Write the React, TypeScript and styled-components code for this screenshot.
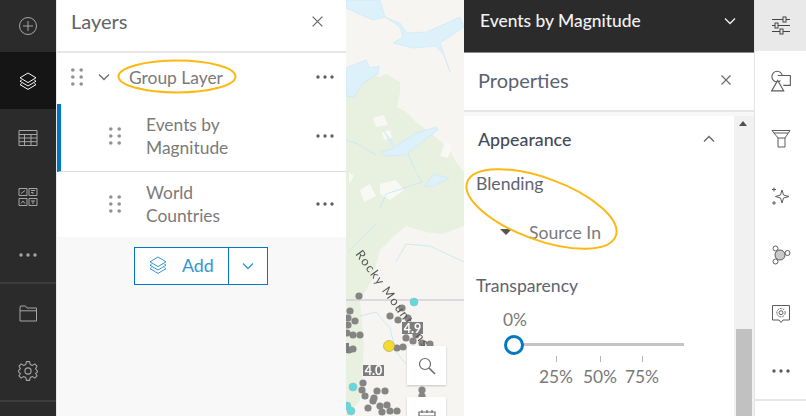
import React from "react";
import styled, { createGlobalStyle } from "styled-components";

const Global = createGlobalStyle`
  html, body { margin: 0; padding: 0; background: #fff; }
  body { font-family: Lato, "Open Sans", "Liberation Sans", sans-serif; }
  * { box-sizing: border-box; }
`;

const Page = styled.div`
  position: relative;
  display: flex;
  width: 806px;
  height: 416px;
  overflow: hidden;
  background: #fff;
`;

const LeftRail = styled.nav`
  flex: 0 0 56px;
  display: flex;
  flex-direction: column;
  background: #2b2b2b;
`;
const RailGroup = styled.div`
  display: flex;
  flex-direction: column;
  border-bottom: 2px solid #3c3c3c;
`;
const RailButton = styled.div<{ $h: number; $active?: boolean }>`
  height: ${(p) => p.$h}px;
  display: flex;
  align-items: center;
  justify-content: center;
  background: ${(p) => (p.$active ? "#151515" : "transparent")};
  color: ${(p) => (p.$active ? "#f4f4f4" : "#a6a6a6")};
`;

const LayersPanel = styled.section`
  flex: 0 0 290px;
  display: flex;
  flex-direction: column;
  background: #f8f8f8;
  border-left: 1px solid #e8e8e8;
`;
const PanelHeader = styled.header<{ $h: number; $pad: number; $closeRight: number; $lift: number }>`
  height: ${(p) => p.$h}px;
  flex: none;
  display: flex;
  align-items: center;
  justify-content: space-between;
  padding: 0 ${(p) => p.$closeRight}px ${(p) => p.$lift}px ${(p) => p.$pad}px;
  background: #fff;
  border-bottom: 2px solid #e6e6e6;
  color: #6a6a6a;
`;
const PanelTitle = styled.h2`
  margin: 0;
  font-size: 20px;
  font-weight: 400;
  color: #636363;
`;
const LayerList = styled.div`
  display: flex;
  flex-direction: column;
  background: #fff;
`;
const LayerRow = styled.div<{ $h: number; $indent: number; $lift: number; $selected?: boolean; $divider?: boolean }>`
  height: ${(p) => p.$h}px;
  display: flex;
  align-items: center;
  padding: 0 11px ${(p) => p.$lift}px ${(p) => p.$indent}px;
  font-size: 17.4px;
  line-height: 23px;
  border-left: 4px solid ${(p) => (p.$selected ? "#0079c1" : "transparent")};
  border-bottom: ${(p) => (p.$divider ? "1px solid #dedede" : "0")};
`;
const Grip = styled.span<{ $gap: number }>`
  display: flex;
  margin-right: ${(p) => p.$gap}px;
  color: #929292;
`;
const Chevron = styled.span`
  display: flex;
  margin-right: 19px;
  color: #6a6a6a;
`;
const LayerName = styled.span`
  flex: 1;
  color: #7a7a7a;
`;
const MoreButton = styled.span`
  display: flex;
  color: #5e5e5e;
`;
const AddBar = styled.div`
  display: flex;
  padding: 10px 0 0 77px;
`;
const AddButton = styled.div`
  display: flex;
  width: 134px;
  height: 38px;
  border: 1.5px solid #0079c1;
  background: #fff;
  color: #3396d2;
  font-size: 17.8px;
`;
const AddMain = styled.div`
  width: 94px;
  display: flex;
  align-items: center;
  gap: 14px;
  padding-left: 13px;
  padding-bottom: 2px;
  border-right: 1.5px solid #0079c1;
`;
const AddCaret = styled.div`
  flex: 1;
  display: flex;
  align-items: center;
  justify-content: center;
`;

const MapArea = styled.div`
  position: relative;
  flex: 0 0 118px;
  height: 416px;
  overflow: hidden;
  background: #f6f5f2;
`;
const MapArt = styled.svg`
  display: block;
  filter: blur(0.4px);
`;
const MapTool = styled.div<{ $top: number }>`
  position: absolute;
  left: 61px;
  top: ${(p) => p.$top}px;
  width: 39px;
  height: 39px;
  display: flex;
  align-items: center;
  justify-content: center;
  background: #fff;
  color: #6a6a6a;
  box-shadow: 0 1px 2px rgba(0, 0, 0, 0.2);
`;

const PropertiesPanel = styled.section`
  flex: 0 0 291px;
  display: flex;
  flex-direction: column;
  background: #fff;
  border-right: 1px solid #e4e4e4;
`;
const DarkHeader = styled.div`
  height: 53px;
  flex: none;
  display: flex;
  align-items: center;
  justify-content: space-between;
  padding: 0 18px 11px 16px;
  background: #2b2b2b;
  border-bottom: 1px solid #8a8a8a;
  color: #f2f2f2;
  font-size: 17.4px;
  font-weight: 500;
`;
const PropTitle = styled.h2`
  margin: 0;
  font-size: 20px;
  font-weight: 400;
  color: #5b6270;
`;
const PropBody = styled.div`
  flex: 1;
  min-height: 0;
  display: flex;
  padding-top: 4px;
  background: linear-gradient(#f8f8f8 0 4px, #fff 4px);
`;
const PropContent = styled.div`
  flex: 1;
  padding: 13px 0 0 12px;
  background: #fff;
`;
const SectionHead = styled.div`
  display: flex;
  align-items: center;
  justify-content: space-between;
  padding: 0 19px 2px 2px;
  height: 22px;
  font-size: 17.8px;
  font-weight: 500;
  color: #434957;
`;
const FieldLabel = styled.div<{ $top: number }>`
  margin-top: ${(p) => p.$top}px;
  font-size: 17.6px;
  line-height: 20px;
  color: #5d6470;
`;
const SelectRow = styled.div`
  display: flex;
  align-items: center;
  gap: 17px;
  margin-top: 28px;
  padding-left: 24px;
  height: 20px;
  font-size: 17.6px;
  color: #7a7a7a;
`;
const Caret = styled.span`
  width: 0;
  height: 0;
  border-left: 6px solid transparent;
  border-right: 6px solid transparent;
  border-top: 6px solid #555;
`;
const SliderBlock = styled.div`
  position: relative;
  height: 84px;
  margin-top: 14px;
  color: #787878;
  font-size: 17.4px;
`;
const ValueLabel = styled.div`
  padding-left: 27px;
  line-height: 20px;
`;
const Track = styled.div`
  position: absolute;
  left: 40px;
  top: 33px;
  width: 168px;
  height: 3px;
  background: #c4c4c4;
`;
const Thumb = styled.div`
  position: absolute;
  left: 28px;
  top: 25px;
  width: 20px;
  height: 20px;
  border-radius: 50%;
  border: 3px solid #0079c1;
  background: #fff;
`;
const Tick = styled.div<{ $x: number }>`
  position: absolute;
  left: ${(p) => p.$x}px;
  top: 46px;
  width: 1px;
  height: 6px;
  background: #b5b5b5;
`;
const TickLabel = styled.div<{ $x: number }>`
  position: absolute;
  left: ${(p) => p.$x}px;
  top: 57px;
  width: 44px;
  margin-left: -22px;
  text-align: center;
  line-height: 20px;
`;
const ScrollBar = styled.div`
  position: relative;
  flex: 0 0 20px;
  background: #f1f1f1;
`;
const ScrollUp = styled.div`
  position: absolute;
  left: 5px;
  top: 5px;
  width: 0;
  height: 0;
  border-left: 4.5px solid transparent;
  border-right: 4.5px solid transparent;
  border-bottom: 5px solid #505050;
`;
const ScrollThumb = styled.div`
  position: absolute;
  left: 2px;
  right: 2px;
  top: 213px;
  bottom: 0;
  background: #c1c1c1;
`;

const RightRail = styled.nav`
  flex: 1;
  display: flex;
  flex-direction: column;
  color: #5c5c5c;
`;
const ToolGroup = styled.div`
  display: flex;
  flex-direction: column;
  border-bottom: 2px solid #e6e6e6;
`;
const ToolButton = styled.div<{ $h: number; $active?: boolean }>`
  height: ${(p) => p.$h}px;
  display: flex;
  align-items: center;
  justify-content: center;
  background: ${(p) => (p.$active ? "#e9e9e9" : "transparent")};
`;
const Annotations = styled.svg`
  position: absolute;
  inset: 0;
  pointer-events: none;
`;

type IconProps = { size?: number; children: React.ReactNode };
const Ico = ({ size = 20, children }: IconProps) => (
  <svg width={size} height={size} viewBox="0 0 20 20" fill="none" stroke="currentColor" strokeWidth="1">
    {children}
  </svg>
);

const LayersIcon = ({ size = 20 }: { size?: number }) => (
  <Ico size={size}>
    <path d="M10 2 L18 6.8 L10 11.6 L2 6.8 Z" />
    <path d="M3.6 9.2 L2 10.2 L10 15 L18 10.2 L16.4 9.2" />
    <path d="M3.6 12.6 L2 13.6 L10 18.4 L18 13.6 L16.4 12.6" />
  </Ico>
);
const Dots = () => (
  <svg width="20" height="6" viewBox="0 0 20 6" fill="currentColor">
    <circle cx="3" cy="3" r="1.7" />
    <circle cx="10" cy="3" r="1.7" />
    <circle cx="17" cy="3" r="1.7" />
  </svg>
);
const GripDots = () => (
  <svg width="12" height="18" viewBox="0 0 12 18" fill="currentColor">
    {[2, 9, 16].map((y) =>
      [1.8, 10.2].map((x) => <circle key={`${x}-${y}`} cx={x} cy={y} r="1.8" />)
    )}
  </svg>
);
const ChevronDown = ({ w = 12 }: { w?: number }) => (
  <svg width={w} height="8" viewBox="0 0 12 8" fill="none" stroke="currentColor" strokeWidth="1.3">
    <path d="M1 1.5 L6 6.5 L11 1.5" />
  </svg>
);
const Close = ({ size = 13 }: { size?: number }) => (
  <svg width={size} height={size} viewBox="0 0 12 12" fill="none" stroke="currentColor" strokeWidth="1.2">
    <path d="M1.5 1.5 L10.5 10.5 M10.5 1.5 L1.5 10.5" />
  </svg>
);

const GRAY: [number, number][] = [
  [13, 296], [56, 308], [44, 316], [62, 318], [4, 311], [2, 318], [9, 321], [2, 325], [1, 333], [7, 335],
  [14, 335], [7, 349], [51, 348], [57, 347], [67, 341], [76, 343], [84, 344], [17, 383], [16, 390], [19, 396],
  [31, 391], [39, 391], [27, 401], [34, 406], [22, 408], [41, 405], [44, 411], [51, 411], [76, 390], [76, 396],
  [28, 398], [36, 412], [60, 331], [52, 320], [70, 335], [3, 350], [60, 338],
];
const CYAN: [number, number][] = [[68, 302], [7, 387], [1, 406], [5, 411]];

const MapPicture = () => (
  <MapArt width="118" height="416" viewBox="0 0 118 416">
    <path d="M0 70 L14 72 L34 77 L40 74 L54 82 L54 92 L51 107 L60 112 L71 123 L84 132 L104 150 L110 162 L118 172 L118 226 L96 234 L80 232 L60 226 L48 236 L34 250 L26 280 L14 300 L18 345 L14 400 L0 416 Z" fill="#e8f0df" />
    <path d="M27 118 L38 115 L42 125 L30 127 Z M36 132 L44 130 L46 138 L38 140 Z M34 184 L50 180 L58 190 L44 200 L34 194 Z M100 140 L106 146 L102 158 L94 156 Z M3 172 L8 176 L3 184 Z M14 190 L24 184 L30 196 L18 202 Z" fill="#f8f8f5" />
    <path d="M0 0 L34 0 L39 17 L27 20 L0 8 Z" fill="#dcf1fa" stroke="#c8e8f4" strokeWidth="0.6" />
    <path d="M39 17 L54 23 L61 33 L81 32 L114 17 L118 27 L94 43 L104 72 L98 55 L90 46 L67 48 L47 43 L57 37 L54 27 Z" fill="#dcf1fa" stroke="#c8e8f4" strokeWidth="0.6" />
    <path d="M0 68 L20 60 L24 68 L33 66 L32 74 L16 84 L8 97 L0 96 Z" fill="#dcf1fa" stroke="#c8e8f4" strokeWidth="0.6" />
    <path d="M37 130 L50 146 L70 133 L90 127 L92 130 L72 145 L60 155 L40 156 L35 152 L48 148 Z" fill="#dcf1fa" stroke="#c8e8f4" strokeWidth="0.6" />
    <path d="M78 186 L88 174 L103 178 L88 186 Z" fill="#dcf1fa" stroke="#c8e8f4" strokeWidth="0.6" />
    <path d="M0 140 L12 144 L30 155 M62 154 L70 172 L76 182 M76 182 L40 194 L34 208 M50 262 L60 244 L84 246 L118 262 M14 316 L30 312 L44 328 L50 352 L60 364 M2 252 L30 224" fill="none" stroke="#c8e8f4" strokeWidth="0.9" />
    <path d="M0 300 L118 300" stroke="#c9bccb" strokeWidth="1" />
    {GRAY.map(([x, y]) => (
      <circle key={`${x}-${y}`} cx={x} cy={y} r="3.6" fill="#858585" />
    ))}
    {CYAN.map(([x, y]) => (
      <circle key={`${x}-${y}`} cx={x} cy={y} r="4" fill="#62d8e0" stroke="#a0b8ba" strokeWidth="0.6" />
    ))}
    <circle cx="43" cy="346" r="5.5" fill="#f4dc2c" stroke="#a8a060" strokeWidth="0.6" />
    <rect x="56" y="322" width="21" height="12" fill="#7d7d7d" />
    <rect x="17" y="365" width="21" height="11" fill="#7d7d7d" />
    <rect x="0" y="343" width="3" height="10" fill="#7d7d7d" />
    <text x="9" y="254" transform="rotate(54 9 254)" fontSize="12.5" letterSpacing="1.5" fill="#555" fontFamily="Lato, sans-serif">Rocky Mountains</text>
    <rect x="56" y="322" width="21" height="12" fill="#7d7d7d" />
    <text x="66.5" y="332.5" textAnchor="middle" fontSize="12.5" fontWeight="700" fill="#fff" fontFamily="Lato, sans-serif">4.9</text>
    <text x="27.5" y="375" textAnchor="middle" fontSize="12.5" fontWeight="700" fill="#fff" fontFamily="Lato, sans-serif">4.0</text>
  </MapArt>
);

export default function App() {
  return (
    <Page>
      <Global />
      <LeftRail>
        <RailButton $h={52}>
          <Ico size={20}>
            <circle cx="10" cy="10" r="8.5" />
            <path d="M10 5 V15 M5 10 H15" />
          </Ico>
        </RailButton>
        <RailButton $h={57} $active>
          <LayersIcon />
        </RailButton>
        <RailButton $h={58}>
          <Ico size={20}>
            <path d="M1 2.5 H19 V17.5 H1 Z M1 6.5 H19 M1 10 H19 M1 13.7 H19 M6.5 6.5 V17.5 M13 6.5 V17.5" />
          </Ico>
        </RailButton>
        <RailButton $h={60}>
          <Ico size={20}>
            <path d="M1 1.5 H9 V8.5 H1 Z M11 1.5 H19 V8.5 H11 Z M1 11.5 H9 V18.5 H1 Z M11 11.5 H19 V18.5 H11 Z M3 6.5 L7 3.5 M13 3.5 H17 M13 5.5 H15 V7 M3 16.5 L5 14 L7 16.5 M13 14 H17 M15 14 V17" />
          </Ico>
        </RailButton>
        <RailGroup>
          <RailButton $h={55}>
            <Dots />
          </RailButton>
        </RailGroup>
        <RailButton $h={58}>
          <Ico size={20}>
            <path d="M2 5 V18 H18.5 V5 H9 L7.5 3 H2.5 Z M2 7.8 H18.5" />
          </Ico>
        </RailButton>
        <RailGroup>
          <RailButton $h={58}>
            <Ico size={22}>
              <circle cx="10" cy="10" r="2.8" />
              <path d="M8.6 1.5 H11.4 L12 4 L14 4.9 L16.2 3.6 L18.2 5.6 L16.9 7.8 L17.7 9 L18.5 10 V11 L16.9 12.2 L18.2 14.4 L16.2 16.4 L14 15.1 L12 16 L11.4 18.5 H8.6 L8 16 L6 15.1 L3.8 16.4 L1.8 14.4 L3.1 12.2 L1.5 11 V9.4 L3.1 7.8 L1.8 5.6 L3.8 3.6 L6 4.9 L8 4 Z" strokeLinejoin="round" />
            </Ico>
          </RailButton>
        </RailGroup>
      </LeftRail>

      <LayersPanel>
        <PanelHeader $h={53} $pad={14} $closeRight={22} $lift={9}>
          <PanelTitle>Layers</PanelTitle>
          <Close />
        </PanelHeader>
        <LayerList>
          <LayerRow $h={51} $indent={10} $lift={3}>
            <Grip $gap={15}><GripDots /></Grip>
            <Chevron><ChevronDown /></Chevron>
            <LayerName>Group Layer</LayerName>
            <MoreButton><Dots /></MoreButton>
          </LayerRow>
          <LayerRow $h={68} $indent={48} $lift={3} $selected $divider>
            <Grip $gap={25}><GripDots /></Grip>
            <LayerName>Events by<br />Magnitude</LayerName>
            <MoreButton><Dots /></MoreButton>
          </LayerRow>
          <LayerRow $h={65} $indent={48} $lift={2}>
            <Grip $gap={25}><GripDots /></Grip>
            <LayerName>World<br />Countries</LayerName>
            <MoreButton><Dots /></MoreButton>
          </LayerRow>
        </LayerList>
        <AddBar>
          <AddButton>
            <AddMain>
              <LayersIcon />
              Add
            </AddMain>
            <AddCaret><ChevronDown /></AddCaret>
          </AddButton>
        </AddBar>
      </LayersPanel>

      <MapArea>
        <MapPicture />
        <MapTool $top={346}>
          <svg width="18" height="18" viewBox="0 0 18 18" fill="none" stroke="currentColor" strokeWidth="1.2">
            <circle cx="7" cy="7" r="5.5" />
            <path d="M11 11 L17 17" strokeWidth="1.6" />
          </svg>
        </MapTool>
        <MapTool $top={397}>
          <svg width="18" height="18" viewBox="0 0 18 18" fill="none" stroke="currentColor" strokeWidth="1.2">
            <path d="M1 4 H17 V18 H1 Z M1 8 H17 M4 2 V5 M9 2 V5 M14 2 V5" />
          </svg>
        </MapTool>
      </MapArea>

      <PropertiesPanel>
        <DarkHeader>
          Events by Magnitude
          <ChevronDown />
        </DarkHeader>
        <PanelHeader $h={59} $pad={14} $closeRight={22} $lift={4}>
          <PropTitle>Properties</PropTitle>
          <Close size={12} />
        </PanelHeader>
        <PropBody>
          <PropContent>
            <SectionHead>
              Appearance
              <svg width="12" height="8" viewBox="0 0 12 8" fill="none" stroke="#666" strokeWidth="1.3">
                <path d="M1 6.5 L6 1.5 L11 6.5" />
              </svg>
            </SectionHead>
            <FieldLabel $top={23}>Blending</FieldLabel>
            <SelectRow>
              <Caret />
              Source In
            </SelectRow>
            <FieldLabel $top={34}>Transparency</FieldLabel>
            <SliderBlock>
              <ValueLabel>0%</ValueLabel>
              <Track />
              <Thumb />
              <Tick $x={80} />
              <Tick $x={124} />
              <Tick $x={166} />
              <TickLabel $x={80}>25%</TickLabel>
              <TickLabel $x={124}>50%</TickLabel>
              <TickLabel $x={166}>75%</TickLabel>
            </SliderBlock>
          </PropContent>
          <ScrollBar>
            <ScrollUp />
            <ScrollThumb />
          </ScrollBar>
        </PropBody>
      </PropertiesPanel>

      <RightRail>
        <ToolGroup>
          <ToolButton $h={51} $active>
            <Ico size={20}>
              <path d="M1 3.5 H19 M1 9.5 H19 M1 15.5 H19" stroke="#444" />
              <rect x="12" y="1" width="3" height="5" fill="#e9e9e9" stroke="#444" />
              <rect x="4" y="7" width="3" height="5" fill="#e9e9e9" stroke="#444" />
              <rect x="9" y="13" width="3" height="5" fill="#e9e9e9" stroke="#444" />
            </Ico>
          </ToolButton>
          <ToolButton $h={60}>
            <Ico size={22}>
              <circle cx="6.5" cy="6" r="4.8" />
              <path d="M7 5 H18.5 V14 H12 M1.5 19 L7 9.5 L12.5 19 Z" fill="#fff" />
            </Ico>
          </ToolButton>
          <ToolButton $h={56}>
            <Ico size={20}>
              <path d="M1 1.5 H19 L14 9 V18 H7 V9 Z M3 4 H17 M7 9 H14" />
            </Ico>
          </ToolButton>
          <ToolButton $h={58}>
            <Ico size={20}>
              <path d="M11 4 L12.5 9 L18 10.5 L12.5 12 L11 17 L9.5 12 L4.5 10.5 L9.5 9 Z" />
              <path d="M3 1.5 V5.5 M1 3.5 H5 M3 15 V19 M1 17 H5" />
            </Ico>
          </ToolButton>
          <ToolButton $h={60}>
            <Ico size={20}>
              <circle cx="9" cy="10" r="5" fill="#c9c9c9" />
              <circle cx="4.5" cy="3.5" r="2.5" fill="#fff" />
              <circle cx="4.5" cy="16.5" r="2.5" fill="#fff" />
              <circle cx="16.5" cy="8" r="2.5" fill="#fff" />
            </Ico>
          </ToolButton>
          <ToolButton $h={58}>
            <Ico size={20}>
              <path d="M1.5 1.5 H18.5 V16 H12 L10 18.5 L8 16 H1.5 Z" />
              <circle cx="10" cy="8.7" r="2" />
              <circle cx="10" cy="8.7" r="4.2" strokeDasharray="2 1" />
            </Ico>
          </ToolButton>
          <ToolButton $h={56}>
            <Dots />
          </ToolButton>
        </ToolGroup>
      </RightRail>

      <Annotations width="806" height="416" viewBox="0 0 806 416" fill="none" stroke="#fcb813" strokeWidth="2">
        <ellipse cx="177" cy="76.5" rx="58.5" ry="16" />
        <ellipse cx="541.5" cy="209" rx="79" ry="31" transform="rotate(20 541.5 209)" />
      </Annotations>
    </Page>
  );
}
